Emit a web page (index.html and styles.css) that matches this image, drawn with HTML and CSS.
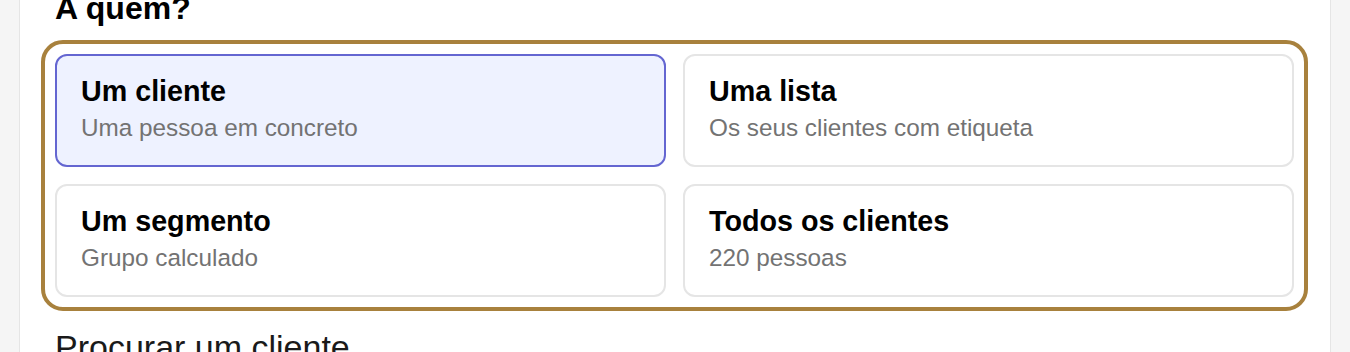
FILE: index.html
```html
<!DOCTYPE html>
<html lang="pt">
<head>
    <meta charset="UTF-8">
    <meta name="viewport" content="width=device-width, initial-scale=1.0">
    <title>Nova mensagem - Destinatários</title>
    <link rel="stylesheet" href="styles.css">
</head>
<body>
    <div class="panel">
        <h2 class="panel-title">A quem?</h2>

        <div class="target-grid">
            <button type="button" class="target-card selected">
                <span class="target-name">Um cliente</span>
                <span class="target-desc">Uma pessoa em concreto</span>
            </button>
            <button type="button" class="target-card">
                <span class="target-name">Uma lista</span>
                <span class="target-desc">Os seus clientes com etiqueta</span>
            </button>
            <button type="button" class="target-card">
                <span class="target-name">Um segmento</span>
                <span class="target-desc">Grupo calculado</span>
            </button>
            <button type="button" class="target-card">
                <span class="target-name">Todos os clientes</span>
                <span class="target-desc">220 pessoas</span>
            </button>
        </div>

        <label class="field-label" for="client-search">Procurar um cliente</label>
    </div>
</body>
</html>
```

FILE: styles.css
```css
:root {
    --bg-page: #f5f5f5;
    --bg-panel: #ffffff;
    --border-light: #e5e5e5;
    --text-primary: #000000;
    --text-label: #1a1a1a;
    --text-muted: #737373;
    --accent: #6466d1;
    --accent-soft: #eef2ff;
    --highlight: #a8813d;

    --radius-md: 12px;
}

* {
    box-sizing: border-box;
    margin: 0;
    padding: 0;
}

body {
    font-family: "Liberation Sans", Arial, sans-serif;
    background: var(--bg-page);
    color: var(--text-primary);
    padding: 0 19px;
    height: 352px;
    overflow: hidden;
}

/* page is scrolled a little, so the heading sits partly above the fold */
.panel {
    background: var(--bg-panel);
    border: 1px solid var(--border-light);
    border-top: none;
    margin-top: -12px;
    padding: 0 36px 40px 35px;
}

.panel-title {
    font-size: 32px;
    font-weight: 700;
    line-height: 40px;
    margin-bottom: 26px;
}

.target-grid {
    display: grid;
    grid-template-columns: 1fr 1fr;
    gap: 17px;
    border-radius: 8px;
    outline: 4px solid var(--highlight);
    outline-offset: 10px;
}

.target-card {
    display: flex;
    flex-direction: column;
    align-items: flex-start;
    text-align: left;
    font-family: inherit;
    background: var(--bg-panel);
    border: 2px solid var(--border-light);
    border-radius: var(--radius-md);
    padding: 18px 24px 20px;
    cursor: pointer;
}

.target-card.selected {
    background: var(--accent-soft);
    border-color: var(--accent);
}

.target-name {
    font-size: 28.7px;
    font-weight: 700;
    line-height: 34px;
    color: var(--text-primary);
}

.target-desc {
    font-size: 24.3px;
    line-height: 34px;
    margin-top: 3px;
    color: var(--text-muted);
}

.field-label {
    display: block;
    margin-top: 30px;
    font-size: 34px;
    line-height: 40px;
    color: var(--text-label);
}
```
